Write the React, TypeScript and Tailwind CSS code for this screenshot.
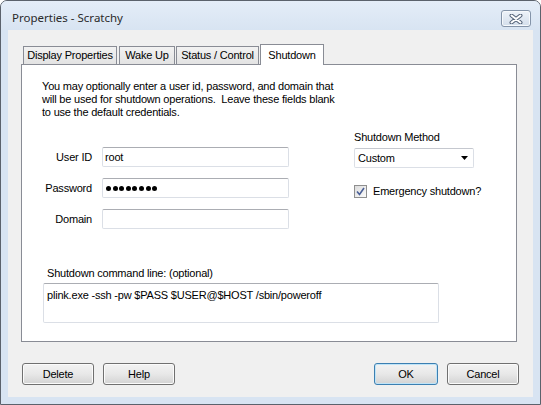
import React from "react";

const ui = { fontFamily: '"Liberation Sans", Arial, sans-serif' };

function TextBox({ children, className = "" }: { children?: React.ReactNode; className?: string }) {
  return (
    <div
      className={`h-[20px] w-[187px] rounded-[2px] border border-[#dbdfe6] border-t-[#abadb3] bg-white pl-[2px] flex items-center text-[11px] text-black ${className}`}
    >
      {children}
    </div>
  );
}

function Button({ label, primary = false, w = "w-[72px]" }: { label: string; primary?: boolean; w?: string }) {
  return (
    <button
      className={`${w} h-[22px] block rounded-[3px] border text-[11px] tracking-[-0.2px] text-black bg-gradient-to-b from-[#f3f3f3] via-[#e8e8e8] to-[#d3d3d3] ${
        primary
          ? "border-[#3c7fb1] shadow-[inset_0_0_0_1px_#bfe4f8]"
          : "border-[#707070] shadow-[inset_0_0_0_1px_#fbfbfb]"
      }`}
      style={ui}
    >
      {label}
    </button>
  );
}

function Tab({ label, w, ml }: { label: string; w: string; ml: string }) {
  return (
    <div
      className={`${w} ${ml} h-[18px] border border-b-0 border-[#898c95] bg-gradient-to-b from-[#f2f2f2] to-[#e3e3e3] flex items-center justify-center text-[11px] text-black`}
    >
      {label}
    </div>
  );
}

export default function App() {
  return (
    <div className="w-[541px] h-[405px] flex flex-col rounded-t-[7px] border border-[#5b626c] bg-[#d8e4f2]" style={ui}>
      {/* title bar */}
      <div className="h-[29px] flex justify-between pl-[11px] pr-[9px] rounded-t-[6px] bg-gradient-to-b from-[#e4edf8] to-[#d8e4f2]">
        <span
          className="mt-[9px] text-[11.5px] leading-[16px] text-[#2a2a2a]"
          style={{ fontFamily: '"Noto Sans", "Open Sans", sans-serif' }}
        >
          Properties - Scratchy
        </span>
        <div className="mt-[9px] w-[30px] h-[17px] rounded-[3px] border border-[#8494a9] bg-gradient-to-b from-[#eef3f9] to-[#d3deeb] shadow-[inset_0_0_0_1px_#f6f9fc] flex items-center justify-center">
          <svg width="14" height="10" viewBox="0 0 14 10">
            <path d="M2.5 1.5 L11.5 8.5 M11.5 1.5 L2.5 8.5" stroke="#56657a" strokeWidth="4" strokeLinecap="round" />
            <path d="M2.5 1.5 L11.5 8.5 M11.5 1.5 L2.5 8.5" stroke="#ffffff" strokeWidth="2" strokeLinecap="round" />
          </svg>
        </div>
      </div>

      {/* client area */}
      <div className="flex-1 mx-[7px] mb-[7px] bg-[#f0f0f0] pt-[14px] pl-[13px] pr-[16px] tracking-[-0.2px]">
        <div className="h-[20px] flex items-end pl-[2px]">
          <Tab label="Display Properties" w="w-[94px]" ml="ml-0" />
          <Tab label="Wake Up" w="w-[56px]" ml="ml-[2px]" />
          <Tab label="Status / Control" w="w-[83px]" ml="ml-[1px]" />
          <div className="relative z-10 ml-[1px] w-[64px] h-[21px] -mb-px border border-b-0 border-[#898c95] bg-white flex justify-center pt-[2px] text-[11px] text-black">
            Shutdown
          </div>
        </div>

        <div className="w-[496px] h-[278px] border border-[#898c95] bg-white pl-[20px] pt-[15px] text-[11px] text-black">
          <p className="leading-[13px] whitespace-pre">
            {"You may optionally enter a user id, password, and domain that\nwill be used for shutdown operations.  Leave these fields blank\nto use the default credentials."}
          </p>

          <div className="mt-[12px] flex">
            <div className="pt-[16px] flex flex-col gap-[11px]">
              <div className="flex items-center">
                <span className="w-[50px] text-right mr-[10px]">User ID</span>
                <TextBox>root</TextBox>
              </div>
              <div className="flex items-center">
                <span className="w-[50px] text-right mr-[10px]">Password</span>
                <TextBox className="gap-[1.6px] pl-[3px]">
                  {Array.from({ length: 8 }).map((_, i) => (
                    <span key={i} className="w-[5px] h-[5px] rounded-full bg-black" />
                  ))}
                </TextBox>
              </div>
              <div className="flex items-center">
                <span className="w-[50px] text-right mr-[10px]">Domain</span>
                <TextBox />
              </div>
            </div>

            <div className="ml-[65px]">
              <div className="leading-[13px]">Shutdown Method</div>
              <div className="mt-[4px] w-[120px] h-[20px] border border-[#dbdfe6] border-t-[#c5c8cf] rounded-[2px] bg-white flex items-center justify-between pl-[3px] pr-[5px]">
                <span>Custom</span>
                <svg width="7" height="4" viewBox="0 0 7 4">
                  <path d="M0 0 H7 L3.5 4 Z" fill="#000" />
                </svg>
              </div>
              <div className="mt-[15px] flex items-center">
                <div className="w-[13px] h-[13px] border border-[#8f8f8f] bg-gradient-to-br from-[#dcdcdc] to-[#fbfbfb] flex items-center justify-center">
                  <svg width="9" height="9" viewBox="0 0 9 9">
                    <path d="M1 4.5 L3.5 7.5 L8 1" stroke="#4a5f97" strokeWidth="1.6" fill="none" />
                  </svg>
                </div>
                <span className="ml-[6px]">Emergency shutdown?</span>
              </div>
            </div>
          </div>

          <div className="mt-[38px] ml-[5px] leading-[13px]">Shutdown command line: (optional)</div>
          <div className="mt-[3px] ml-[1px] w-[396px] h-[40px] rounded-[2px] border border-[#dbdfe6] border-t-[#abadb3] bg-white pl-[3px] pt-[5px] leading-[13px]">
            plink.exe -ssh -pw $PASS $USER@$HOST /sbin/poweroff
          </div>
        </div>

        <div className="mt-[21px] ml-[1px] w-[497px] flex items-start gap-[9px]">
          <Button label="Delete" />
          <Button label="Help" />
          <div className="flex-1" />
          <Button label="OK" primary w="w-[64px]" />
          <Button label="Cancel" />
        </div>
      </div>
    </div>
  );
}
